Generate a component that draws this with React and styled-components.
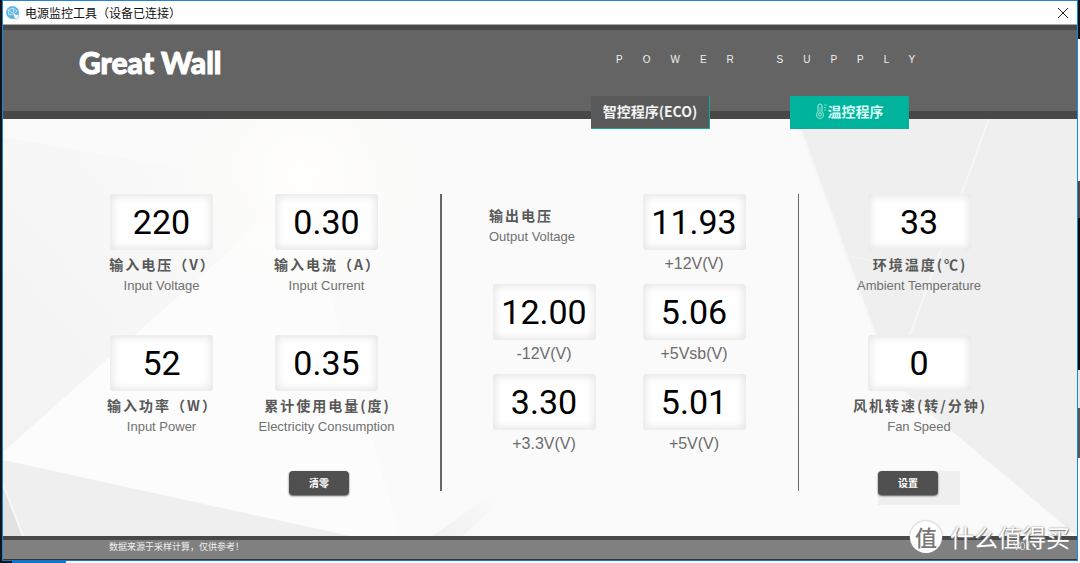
import React from "react";
import styled, { createGlobalStyle } from "styled-components";

const sans = `"Liberation Sans", "Noto Sans CJK SC", sans-serif`;
const cjk = `"Noto Sans CJK SC", "Liberation Sans", sans-serif`;

const GlobalStyle = createGlobalStyle`
  * { box-sizing: border-box; }
  body {
    margin: 0;
    background: #10161c;
    font-family: ${sans};
  }
  button { font: inherit; border: 0; padding: 0; cursor: pointer; }
`;

const Desktop = styled.div`
  min-height: 100vh;
  display: flex;
  flex-direction: column;
  padding: 0 2px;
  background: linear-gradient(
    #0b141c 0 39px, #f4f8fc 39px 181px, #4a4a50 181px 218px,
    #0a0a0c 218px 370px, #e4e8ee 370px 408px, #53565e 408px 458px,
    #fafafa 458px
  ) right / 2px 100% no-repeat, #10161c;
`;

const Window = styled.div`
  position: relative;
  flex: 1;
  display: flex;
  flex-direction: column;
  border: 1px solid #2383d4;
  border-bottom-color: #1477c9;
  background: #fafafa;
`;

const TitleBar = styled.div`
  display: flex;
  align-items: center;
  gap: 5px;
  height: 24px;
  padding: 0 8px 0 3px;
  background: #fff;
  border-bottom: 1px solid #a8a8a8;
`;

const Title = styled.h1`
  flex: 1;
  margin: 0;
  font: 400 12px/22px ${cjk};
  color: #111;
`;

const CloseButton = styled.button`
  display: flex;
  background: none;
  color: #222;
`;

const Header = styled.header`
  position: relative;
  z-index: 1;
  display: flex;
  height: 94px;
  padding: 0 137px 0 76px;
  background: #646464;
  border-top: 5px solid #484848;
  border-bottom: 8px solid #484848;
`;

const Brand = styled.div`
  flex: 1;
  padding-top: 14px;
  font: 900 30px/36px Lato, sans-serif;
  -webkit-text-stroke: 1px #fff;
  color: #fff;
`;

const HeaderSide = styled.div`
  display: flex;
  flex-direction: column;
  justify-content: space-between;
  width: 349px;
`;

const Tagline = styled.p`
  margin: 0;
  padding: 22px 0 0 25px;
  font-size: 10px;
  line-height: 16px;
  letter-spacing: 20px;
  white-space: nowrap;
  color: #f0f0f0;
`;

const Modes = styled.nav`
  display: flex;
  gap: 80px;
  margin-bottom: -18px;
`;

const ModeButton = styled.button`
  display: flex;
  align-items: center;
  justify-content: center;
  width: 119px;
  height: 33px;
  padding-bottom: 2px;
  color: ${(p) => (p.$active ? "#d9fff6" : "#f4f4f4")};
  background: ${(p) => (p.$active ? "#00b39c" : "#595959")};
  border-right: 1px solid #12a896;
  border-bottom: 1px solid #12a896;
  font: 700 14px/20px ${cjk};
`;

const Main = styled.main`
  position: relative;
  flex: 1;
  display: grid;
  grid-template-columns: 437fr 2px 356fr 1px 278fr;
  padding: 75px 0 31px;
`;

const Backdrop = styled.svg`
  position: absolute;
  inset: 0;
  width: 100%;
  height: 100%;
`;

const Divider = styled.div`
  position: relative;
  margin-bottom: 14px;
  background: #666;
`;

const Section = styled.section`
  position: relative;
  display: flex;
  flex-direction: column;
  align-items: center;
  gap: 33px;
  padding: ${(p) => p.$pad};
`;

const Readings = styled.div`
  display: grid;
  grid-template-columns: repeat(${(p) => p.$columns}, 1fr);
  row-gap: ${(p) => p.$gap};
  width: 100%;
`;

const Reading = styled.div`
  display: flex;
  flex-direction: column;
  align-items: center;
  white-space: nowrap;
`;

const Display = styled.output`
  display: flex;
  align-items: center;
  justify-content: center;
  width: 103px;
  height: 56px;
  margin-bottom: ${(p) => (p.$tight ? "0" : "3px")};
  border-radius: 3px;
  background: #fff;
  box-shadow: inset 0 0 8px 2px #e4e4e4;
  color: #000;
  font: 400 34px/56px Roboto, sans-serif;
`;

const Label = styled.span`
  padding-left: ${(p) => (p.$flush ? "0" : "2px")};
  font: 700 14px/22px ${cjk};
  letter-spacing: 2px;
  color: #585858;
`;

const SubLabel = styled.span`
  font-size: 13px;
  line-height: 22px;
  color: #707070;
`;

const RailLabel = styled.span`
  font-size: 16px;
  line-height: 28px;
  color: #6c6c6c;
`;

const GroupTitle = styled.h2`
  display: flex;
  flex-direction: column;
  margin: 0;
  padding: 10px 0 0 20px;
  white-space: nowrap;
  font-weight: 400;
`;

const ActionButton = styled.button`
  width: 60px;
  height: 24px;
  border-radius: 4px;
  background: #505050;
  box-shadow: 0 1px 2px #555;
  color: #fff;
  font: 700 10px/22px ${cjk};
`;

const ActionRow = styled.div`
  width: 100%;
  display: flex;
  padding-left: 210px;
`;

const ActionTray = styled.div`
  width: 82px;
  height: 34px;
  background: #efefef;
`;

const Footer = styled.footer`
  display: flex;
  align-items: flex-start;
  justify-content: space-between;
  height: 24px;
  padding: 0 46px 0 106px;
  border-top: 4px solid #484848;
  border-bottom: 1px solid #333;
  background: #808080;
  color: #f0f0f0;
  font: 400 9px/14px ${cjk};
`;

const Version = styled.span`
  position: relative;
  z-index: 3;
  font: 400 10px/14px ${sans};
  color: #ddd;
`;

const Watermark = styled.div`
  position: absolute;
  z-index: 2;
  right: 7px;
  bottom: 6px;
  display: flex;
  align-items: center;
  gap: 8px;
  color: #fff;
  font: 400 24px/34px ${cjk};
  text-shadow: 0 0 2px #777, 1px 1px 1px #888;
`;

const Badge = styled.span`
  width: 32px;
  height: 32px;
  border-radius: 50%;
  background: #fff;
  box-shadow: 0 0 2px #999;
  color: #777;
  font: 500 22px/30px ${cjk};
  text-align: center;
  text-shadow: none;
`;

const Taskbar = styled.div`
  height: 2px;
  background: linear-gradient(90deg, #10161c 10px, #1674c8 10px 64px, #f3f6fa 64px);
`;

function AppIcon() {
  return (
    <svg width="14" height="14" viewBox="0 0 14 14" aria-hidden="true">
      <circle cx="6.5" cy="6.5" r="6.5" fill="#5db4e0" />
      <path d="M2 4l5-2 4 3-3 3-5 1zM7 2l1 6M2 4l6 4" fill="none" stroke="#bfe6f7" />
      <path d="M7 8l1-1 2 2 2-1 1 3-2 2H9z" fill="#fff" stroke="#4da8d8" strokeWidth=".6" />
    </svg>
  );
}

function Thermometer() {
  return (
    <svg width="13" height="16" viewBox="0 0 13 16" fill="none" stroke="#a8eadd" aria-hidden="true">
      <path d="M3 9V3a2 2 0 0 1 4 0v6a3.500 3.500 0 1 1-4 0z" />
      <circle cx="5" cy="11.500" r="1.500" />
      <path d="M5 4v6M9 2h3M9 4.500h2M9 7h2" strokeWidth=".7" />
    </svg>
  );
}

function Facets() {
  return (
    <Backdrop viewBox="0 0 1074 417" preserveAspectRatio="none" aria-hidden="true">
      <defs>
        <radialGradient id="glow" cx="300" cy="58" r="130" gradientUnits="userSpaceOnUse">
          <stop offset="0" stopColor="#fffefb" />
          <stop offset="1" stopColor="#fffefb" stopOpacity="0" />
        </radialGradient>
        <linearGradient id="face" x1="0" y1="1" x2="1" y2="0">
          <stop offset="0" stopColor="#f2f2f2" />
          <stop offset="1" stopColor="#fbfbfb" />
        </linearGradient>
        <linearGradient id="fold" x1="0" y1="1" x2="1" y2="0">
          <stop offset="0" stopColor="#f0f0f0" />
          <stop offset=".6" stopColor="#fafafa" />
        </linearGradient>
      </defs>
      <rect width="1074" height="417" fill="#fafafa" />
      <path d="M0 18L270 66 264 99 0 333z" fill="url(#face)" />
      <path d="M264 99L0 333v8l347 76h50L320 150z" fill="#fcfcfc" />
      <rect width="600" height="250" fill="url(#glow)" />
      <path d="M0 341L347 417H0z" fill="#efefef" />
      <path d="M0 365L20 417H0z" fill="#e2e2e2" />
      <path d="M0 365L20 417" stroke="#f8f8f8" strokeWidth="2" />
      <path d="M430 417L530 345 500 380 460 417z" fill="url(#fold)" />
      <path d="M794 0h280v417L902 273 873 220z" fill="#efefef" />
      <path d="M794 0l79 218M986 0l-80 218" stroke="#f7f7f7" strokeWidth="2" />
      <path d="M440 50L870 142M480 417L865 270M555 345L880 278M745 417L870 290" fill="none" stroke="#fff" strokeOpacity=".4" />
    </Backdrop>
  );
}

function Meter({ value, label, sub }) {
  return (
    <Reading>
      <Display aria-label={sub}>{value}</Display>
      <Label>{label}</Label>
      <SubLabel>{sub}</SubLabel>
    </Reading>
  );
}

function Rail({ value, label }) {
  return (
    <Reading>
      <Display $tight aria-label={label}>{value}</Display>
      <RailLabel>{label}</RailLabel>
    </Reading>
  );
}

export default function App() {
  return (
    <Desktop>
      <GlobalStyle />
      <Window>
        <TitleBar>
          <AppIcon />
          <Title>电源监控工具（设备已连接）</Title>
          <CloseButton aria-label="关闭">
            <svg width="12" height="12" viewBox="0 0 12 12" stroke="currentColor">
              <path d="M1 1l10 10M11 1L1 11" />
            </svg>
          </CloseButton>
        </TitleBar>
        <Header>
          <Brand>Great Wall</Brand>
          <HeaderSide>
            <Tagline>POWER SUPPLY</Tagline>
            <Modes>
              <ModeButton>智控程序(ECO)</ModeButton>
              <ModeButton $active>
                <Thermometer />
                温控程序
              </ModeButton>
            </Modes>
          </HeaderSide>
        </Header>
        <Main>
          <Facets />
          <Section $pad="0 31px 0 76px">
            <Readings $columns={2} $gap="38px">
              <Meter value="220" label="输入电压（V）" sub="Input Voltage" />
              <Meter value="0.30" label="输入电流（A）" sub="Input Current" />
              <Meter value="52" label="输入功率（W）" sub="Input Power" />
              <Meter value="0.35" label="累计使用电量(度)" sub="Electricity Consumption" />
            </Readings>
            <ActionRow>
              <ActionButton>清零</ActionButton>
            </ActionRow>
          </Section>
          <Divider />
          <Section $pad="0 29px 0 27px">
            <Readings $columns={2} $gap="6px">
              <GroupTitle>
                <Label $flush>输出电压</Label>
                <SubLabel>Output Voltage</SubLabel>
              </GroupTitle>
              <Rail value="11.93" label="+12V(V)" />
              <Rail value="12.00" label="-12V(V)" />
              <Rail value="5.06" label="+5Vsb(V)" />
              <Rail value="3.30" label="+3.3V(V)" />
              <Rail value="5.01" label="+5V(V)" />
            </Readings>
          </Section>
          <Divider />
          <Section $pad="0 38px 0 0">
            <Readings $columns={1} $gap="38px">
              <Meter value="33" label="环境温度(℃)" sub="Ambient Temperature" />
              <Meter value="0" label="风机转速(转/分钟)" sub="Fan Speed" />
            </Readings>
            <ActionTray>
              <ActionButton>设置</ActionButton>
            </ActionTray>
          </Section>
        </Main>
        <Footer>
          <span>数据来源于采样计算，仅供参考！</span>
          <Version>V01</Version>
        </Footer>
        <Watermark>
          <Badge>值</Badge>
          <span>什么值得买</span>
        </Watermark>
      </Window>
      <Taskbar />
    </Desktop>
  );
}
